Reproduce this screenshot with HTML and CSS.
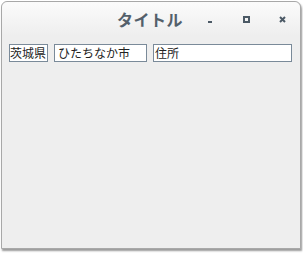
FILE: index.html
```html
<html>
    <head>
        <meta name="viewport" content="width=device-width, initial-scale=1.0">
        <link rel="stylesheet" href="styles.css">
    </head>
    <body>
        <div class="window">
            <div class="titlebar">
                <div class="title">タイトル</div>
                <div class="buttons">
                    <div class="btn"><span class="min"></span></div>
                    <div class="btn"><span class="max"></span></div>
                    <div class="btn">
                        <svg width="7" height="7" viewBox="0 0 7 7">
                            <path d="M1 1 L6 6 M6 1 L1 6" stroke="#4c5a66" stroke-width="2"/>
                        </svg>
                    </div>
                </div>
            </div>
            <div class="content">
                <div class="field pref">茨城県</div>
                <div class="field city">ひたちなか市</div>
                <div class="field addr">住所</div>
            </div>
        </div>
    </body>
</html>
```

FILE: styles.css
```css
html, body {
    margin: 0;
    padding: 0;
    background: #ffffff;
    font-family: "Noto Sans CJK JP", sans-serif;
}
body {
    padding: 1px 2px 4px 1px;
    width: 303px;
    height: 253px;
    box-sizing: border-box;
}
.window {
    height: 248px;
    box-sizing: border-box;
    border: solid 1px #a8a8a8;
    border-radius: 6px 6px 0 0;
    background: #eeeeee;
    box-shadow: 1px 2px 2px #9a9a9a;
    display: flex;
    flex-direction: column;
}
.titlebar {
    height: 34px;
    flex: none;
    display: flex;
    align-items: center;
    border-radius: 6px 6px 0 0;
    background: linear-gradient(#fbfbfb, #eeeeee);
}
.title {
    flex: none;
    width: 75px;
    margin-left: 115px;
    white-space: nowrap;
    font-size: 16px;
    font-weight: bold;
    color: #53606b;
    letter-spacing: 0.5px;
}
.buttons {
    flex: none;
    display: flex;
}
.btn {
    width: 36px;
    height: 20px;
    display: flex;
    align-items: center;
    justify-content: center;
}
.min {
    width: 4px;
    height: 2px;
    margin-top: 5px;
    background: #4c5a66;
}
.max {
    width: 3px;
    height: 3px;
    border: solid 2px #4c5a66;
}
.content {
    display: flex;
    gap: 6px;
    padding: 8px 7px 0 7px;
}
.field {
    flex: none;
    height: 18px;
    box-sizing: border-box;
    border: solid 1px #7a8a99;
    background: #ffffff;
    font-size: 12px;
    line-height: 16px;
    padding: 0 1px;
    color: #222222;
    white-space: nowrap;
    overflow: hidden;
}
.pref {
    width: 39px;
    padding: 0;
}
.city {
    width: 93px;
    padding-left: 3px;
}
.addr {
    width: 139px;
}
```
